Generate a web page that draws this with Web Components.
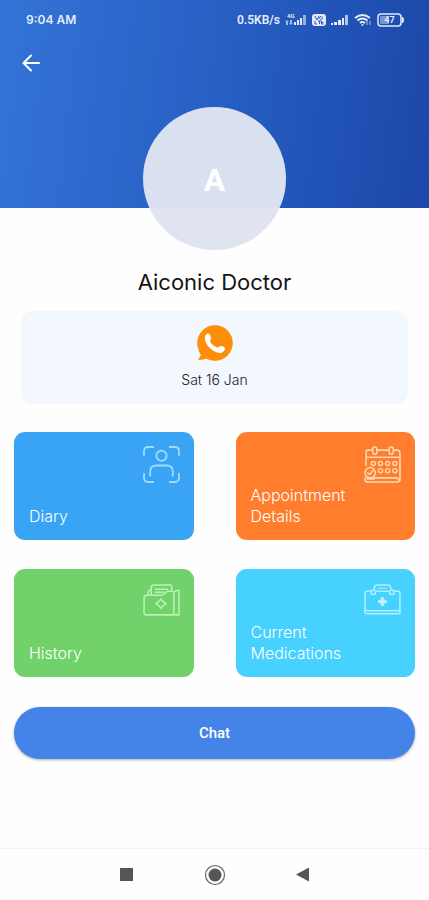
<!DOCTYPE html>
<html lang="en">
<head>
<meta charset="utf-8">
<meta name="viewport" content="width=device-width, initial-scale=1">
<title>Aiconic Doctor</title>
<style>
html, body { margin: 0; }
body { background: #fefefe; font-family: Inter, "Liberation Sans", sans-serif; }
</style>
</head>
<body>
<patient-screen></patient-screen>
<script>
const define = (name, html, setup) => customElements.define(name, class extends HTMLElement {
  connectedCallback() {
    if (this.shadowRoot) return;
    const template = document.createElement('template');
    template.innerHTML = html;
    this.attachShadow({ mode: 'open' }).append(template.content.cloneNode(true));
    if (setup) setup(this, this.shadowRoot);
  }
});

define('status-bar', `
<style>
:host { display: flex; justify-content: space-between; align-items: center; height: 40px; padding: 0 24px 0 26px; color: #e4ecfb; font: 600 12px/16px Inter, "Liberation Sans", sans-serif; }
.right { display: flex; align-items: center; gap: 5px; font: 600 12px/16px Roboto, "Liberation Sans", sans-serif; }
svg { display: block; }
</style>
<span>9:04 AM</span>
<div class="right">
  <span>0.5KB/s</span>
  <svg width="22" height="16" viewBox="0 0 22 16" fill="currentColor" aria-hidden="true">
    <text x="2" y="6" font-size="6" font-family="Roboto, sans-serif" font-weight="700">4G</text>
    <path d="M0 10l2-2 2 2h-1v3h-2v-3zM4 11h1v-3h2v3h1l-2 2z" opacity=".65"/>
    <path d="M9 10h2v3h-2zM12 8h2v5h-2zM15 6h2v7h-2z"/><path d="M18 3h3v10h-3z" opacity=".6"/>
  </svg>
  <svg width="14" height="14" viewBox="0 0 14 14" aria-hidden="true">
    <rect y="1" width="14" height="12" rx="3" fill="currentColor"/>
    <path d="M3 3l2 4 2-4M9 3.500a1.500 1.500 0 1 0 .1 0M3 8v3h2M6 8h3M7.500 8v3M9.500 8v3h2M9.500 9.500h2" stroke="#315bb1" stroke-width="1" fill="none"/>
  </svg>
  <svg width="18" height="16" viewBox="0 0 18 16" fill="currentColor" aria-hidden="true">
    <path d="M0 11h2v2h-2zM3 10h3v3h-3zM7 8h3v5h-3zM11 6h2v7h-2z"/><path d="M14 3h3v10h-3z" opacity=".75"/>
  </svg>
  <svg width="18" height="16" viewBox="0 0 18 16" fill="none" stroke="currentColor" aria-hidden="true">
    <path d="M1 6q7.500-6 15 0M3.500 8.500q5-4 10 0M6 11q2.500-2 5 0" stroke-width="2"/><circle cx="8.500" cy="13" r="1" fill="currentColor" stroke="none"/><path d="M13 13V9M16 9v4" opacity=".7"/>
  </svg>
  <svg width="28" height="16" viewBox="0 0 28 16" aria-hidden="true">
    <rect x="1" y="2" width="23" height="12" rx="3" fill="none" stroke="currentColor" stroke-width="1.500"/>
    <rect x="3" y="4" width="9" height="8" rx="1" fill="currentColor" opacity=".45"/>
    <path d="M25 5h1q2 3 0 6h-1z" fill="currentColor"/>
    <text x="12.500" y="11" text-anchor="middle" font-size="9" font-weight="700" font-family="Roboto, sans-serif" fill="currentColor">47</text>
  </svg>
</div>`);

define('profile-header', `
<style>
:host { display: flex; flex-direction: column; background: linear-gradient(97deg, #3374d6 0%, #2860c4 48%, #1b47a9 100%); }
button { display: flex; align-items: center; justify-content: center; width: 46px; height: 46px; margin-left: 8px; padding: 0; border: 0; background: none; color: #fff; cursor: pointer; }
.avatar { display: flex; align-items: center; justify-content: center; align-self: center; box-sizing: border-box; width: 143px; height: 143px; margin-top: 21px; margin-bottom: -42px; padding-top: 3px; border-radius: 50%; background: linear-gradient(#d9e0ef 0 101px, #dfe4f0 101px); color: #fff; font: 700 32px/40px Roboto, "Liberation Sans", sans-serif; }
</style>
<status-bar></status-bar>
<button type="button" aria-label="Back">
  <svg width="18" height="18" viewBox="0 0 18 18" fill="none" stroke="currentColor" stroke-width="2" stroke-linecap="round" stroke-linejoin="round"><path d="M17 9H1.500M9 1.500L1.500 9L9 16.500"/></svg>
</button>
<div class="avatar"><slot></slot></div>`);

define('visit-card', `
<style>
:host { display: flex; flex-direction: column; align-items: center; gap: 8px; margin: 0 21px; padding: 14px 0; border-radius: 12px; background: #f2f8fe; color: #222; font: 300 14px/21px Inter, "Liberation Sans", sans-serif; }
button { display: flex; padding: 0; border: 0; background: none; cursor: pointer; }
</style>
<button type="button" aria-label="Call">
<svg width="36" height="36" viewBox="0 0 36 36"><circle cx="18" cy="18" r="17.800" fill="#fd8f08"/><path d="M1 25L4 30L1 35Q8 35 12 32Z" fill="#fd8f08"/><path d="M9 9.500Q11 7.500 13 10Q15 13 13 16Q14 19.500 20 22.500Q22 22 23.500 21Q26 20.500 28 23Q28.500 25 26 27Q22 29.500 16 25.500Q9.500 21 8 15Q7.500 11 9 9.500Z" fill="#fff"/></svg>
</button>
<slot></slot>`);

const icons = {
  scan: `<g stroke-width="1.800"><path d="M1 9V5q0-4 4-4h5M26 1h5q4 0 4 4v4M35 27v4q0 4-4 4h-5M10 35H5q-4 0-4-4v-4"/><circle cx="18" cy="9.500" r="5"/><path d="M7 29v-4q0-6 6-6h10q6 0 6 6v4"/></g>`,
  calendar: `<path d="M2 19V6q0-2 2-2h4M13 4h11M29 4h3q3 0 3 3v25q0 3-3 3H4M2 11h33"/><rect x="8.500" y="1" width="4" height="7" rx="2"/><rect x="24.500" y="1" width="4" height="7" rx="2"/><g stroke-width="1.400"><circle cx="9" cy="17" r="2"/><circle cx="16" cy="17" r="2"/><circle cx="23" cy="17" r="2"/><circle cx="30" cy="17" r="2"/><circle cx="16" cy="24" r="2"/><circle cx="23" cy="24" r="2"/><circle cx="30" cy="24" r="2"/></g><circle cx="6" cy="26" r="5"/><path d="M3.500 26l2 2 3-4M1 31v2q0 2 3 2M10 31h22l3 3M3 32h7"/>`,
  folder: `<path d="M5 12V9q0-2 2-2h1M8 12V5q0-3 3-3h15q2 0 2 2v3M12 6h12M12 9h8M30 9q5-4 5 0v22h-5M4 12h14q2 0 4-2.500Q23 8 25 8h3q2 0 2 2v19q0 2-2 2H3q-2 0-2-2V15q0-3 3-3Z"/><path d="M17.500 15.500l2 2.500 3 2-3 2-2 3-2-3-3-2 3-2Z"/>`,
  kit: `<path d="M7 8H3Q1 8 1 10v19q0 1 2 1h30q2 0 2-1V10q0-2-2-2h-4M1 27h34"/><path d="M7 11V7h3V5q0-3 3-3h10q3 0 3 3v2h3v4h-4V8H11v3Z"/><path d="M14 5h8" stroke-width="1"/><path d="M17 14.500h2v2.500h2.500v2H19v2.500h-2V19h-2.500v-2H17Z" fill="#dff8ff"/>`
};

define('action-tile', `
<style>
:host { display: grid; }
button { display: flex; flex-direction: column; justify-content: space-between; min-height: 108px; padding: 14px 14px 13px 15px; border: 0; border-radius: 11px; background: var(--tile); color: #fff; font: 300 16px/21px Inter, "Liberation Sans", sans-serif; text-align: left; cursor: pointer; }
svg { align-self: flex-end; flex: none; width: 37px; height: 37px; fill: none; stroke: var(--line); stroke-width: 1.500; stroke-linecap: round; stroke-linejoin: round; }
span { max-width: 110px; margin-top: -10px; }
</style>
<button type="button"><svg viewBox="0 0 36 36" aria-hidden="true"></svg><span><slot></slot></span></button>`,
(host, root) => { root.querySelector('svg').innerHTML = icons[host.getAttribute('icon')]; });

define('chat-button', `
<style>
:host { display: grid; margin: 30px 14px 0; }
button { height: 52px; border: 0; border-radius: 26px; background: #4484e8; color: #fff; font: 500 15px/20px Roboto, "Liberation Sans", sans-serif; box-shadow: 0 1px 3px #0005; cursor: pointer; }
</style>
<button type="button"><slot></slot></button>`);

define('system-nav', `
<style>
:host { display: flex; align-items: center; justify-content: center; gap: 64px; height: 51px; margin-top: auto; border-top: 1px solid #f3f3f3; }
button { display: flex; padding: 0; border: 0; background: none; cursor: pointer; }
svg { width: 24px; height: 24px; fill: #555; }
</style>
<button type="button" aria-label="Recent apps"><svg viewBox="0 0 24 24"><path d="M5 5h13v13H5z"/></svg></button>
<button type="button" aria-label="Home"><svg viewBox="0 0 24 24"><circle cx="12" cy="12" r="9.500" fill="none" stroke="#666" stroke-width="1.200"/><circle cx="12" cy="12" r="6.500"/></svg></button>
<button type="button" aria-label="Back"><svg viewBox="0 0 24 24"><path d="M18 4.500v14L5 11.500z"/></svg></button>`);

define('patient-screen', `
<style>
:host { display: flex; flex-direction: column; min-height: 100vh; }
h1 { margin: 58px 0 0; padding: 0 0 13px; color: #151515; font: 400 22px/32px Inter, "Liberation Sans", sans-serif; text-align: center; }
.tiles { display: grid; grid-template-columns: 1fr 1fr; column-gap: 42px; row-gap: 29px; margin: 28px 14px 0; }
</style>
<profile-header>A</profile-header>
<h1>Aiconic Doctor</h1>
<visit-card>Sat 16 Jan</visit-card>
<div class="tiles">
  <action-tile icon="scan" style="--tile:#39a4f3;--line:#9bdcff">Diary</action-tile>
  <action-tile icon="calendar" style="--tile:#ff7d2d;--line:#ffd9b4">Appointment Details</action-tile>
  <action-tile icon="folder" style="--tile:#71d26b;--line:#b9f2b4">History</action-tile>
  <action-tile icon="kit" style="--tile:#47d1ff;--line:#b0efff">Current Medications</action-tile>
</div>
<chat-button>Chat</chat-button>
<system-nav></system-nav>`);
</script>
</body>
</html>
